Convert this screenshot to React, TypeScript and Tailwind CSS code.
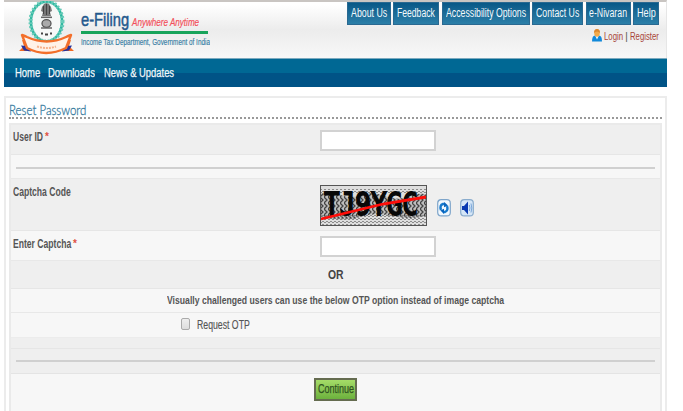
import { useLayoutEffect, useRef, useState, type ReactNode } from "react";

/** Condensed label: its text is squeezed or stretched to the given width. */
function Fit({ width, className = "", children }: { width: number; className?: string; children: ReactNode }) {
  const ref = useRef<HTMLSpanElement>(null);
  const [scale, setScale] = useState(1);
  useLayoutEffect(() => {
    if (ref.current) setScale(width / ref.current.offsetWidth);
  }, [width]);
  return (
    <span className={`block shrink-0 whitespace-nowrap ${className}`} style={{ width }}>
      <span ref={ref} className="inline-block origin-left" style={{ transform: `scaleX(${scale})` }}>
        {children}
      </span>
    </span>
  );
}

const topLinks = [
  { label: "About Us", text: 36, box: 44 },
  { label: "Feedback", text: 38, box: 46 },
  { label: "Accessibility Options", text: 80, box: 88 },
  { label: "Contact Us", text: 43, box: 51 },
  { label: "e-Nivaran", text: 38, box: 45 },
  { label: "Help", text: 19, box: 26 },
];

function Emblem() {
  return (
    <svg className="mt-px h-[54px] w-[56px] shrink-0" viewBox="0 0 56 54">
      <ellipse cx="27.5" cy="20.5" rx="15.6" ry="19.8" fill="#f6f8f7" stroke="#2fb8a0" strokeWidth="2.6" />
      <ellipse cx="27.5" cy="20.5" rx="16" ry="20.2" fill="none" stroke="#68cbb9" strokeWidth="4" strokeDasharray="1.8 1.8" />
      <path d="M23 6l2-3 2.5-1 2.5 1 2 3 1 4-2 1 1 4H23l1-4-2-1z" fill="#777" />
      <path d="M24.5 5v8M27.5 3v11M30.5 5v8" stroke="#444" strokeWidth="1" />
      <path d="M22 15.5h11v1.6H22z" fill="#666" />
      <ellipse cx="27.5" cy="22.5" rx="4.5" ry="3.8" fill="#aaa" stroke="#555" strokeWidth="1.3" />
      <path d="M22 27h11" stroke="#666" strokeWidth="1.5" />
      <path d="M22 32.5h2m2 1h3m2-1h2" stroke="#444" strokeWidth="2" />
      <path d="M0 50l5-5-2-6 9 2v9zM55 50l-5-5 2-6-9 2v9z" fill="#f26a24" />
      <path d="M2 44.5l6 .5 4 5.5-7-1zM53 44.5l-6 .5-4 5.5 7-1z" fill="#28329b" />
      <path d="M3 34q3 1 5 2 20 9 39 0 2-1 5-2l-5 13q-20 10-39 0z" fill="#fff2e8" stroke="#f36f2b" strokeWidth="2.4" strokeLinejoin="round" />
      <path d="M18 45.5q10 3 19 0" fill="none" stroke="#f7b28b" strokeWidth="2" strokeDasharray="2 1" />
    </svg>
  );
}

function Captcha() {
  return (
    <svg className="block h-[41px] w-[107px]" viewBox="0 0 107 41">
      <defs>
        <pattern id="zigzag" width="4" height="3" patternUnits="userSpaceOnUse">
          <path d="M-1 0L1 2 3 0 5 2" fill="none" stroke="#777" strokeWidth="0.8" />
        </pattern>
        <pattern id="waves" width="4" height="6" patternUnits="userSpaceOnUse">
          <path d="M0 0L3 3 0 6" fill="none" stroke="#444" strokeWidth="1.3" />
        </pattern>
      </defs>
      <rect width="107" height="41" fill="#dedede" />
      <path d="M1 9Q8 6 20 10T42 10 65 11 86 12 106 9V31Q90 35 72 31T40 32 1 32z" fill="#bdbdbd" />
      <path d="M1 9Q8 6 20 10T42 10 65 11 86 12 106 9V31Q90 35 72 31T40 32 1 32z" fill="url(#waves)" />
      <path d="M1 4h105v5H1zM1 30h105v10H1z" fill="url(#zigzag)" />
      <text
        x="4"
        y="29.5"
        textLength="94"
        lengthAdjust="spacingAndGlyphs"
        fontFamily="DejaVu Sans Mono, monospace"
        fontSize="32"
        fill="#080808"
        stroke="#080808"
        strokeWidth="1.8"
      >
        TJ9YGC
      </text>
      <path d="M1 34L63 19 106 12" fill="none" stroke="#ff0d08" strokeWidth="2.8" />
      <rect x="0.5" y="0.5" width="106" height="40" fill="none" stroke="#555" />
    </svg>
  );
}

function RefreshIcon() {
  return (
    <svg className="h-[18px] w-[14px]" viewBox="0 0 14 18">
      <rect x="0.7" y="0.7" width="12.6" height="16.2" rx="3.5" fill="#f1f8fe" stroke="#7ea5ca" strokeWidth="1.2" />
      <path d="M4 11Q2.4 6.2 6 5h2" fill="none" stroke="#1679cc" strokeWidth="2.4" />
      <path d="M7.2 3L11 6.5 7 8.2z" fill="#0864bd" />
      <path d="M10 7q1.6 4.6-2 6H6" fill="none" stroke="#1679cc" strokeWidth="2.4" />
      <path d="M7 9.8L3.4 11.6 7 15z" fill="#0864bd" />
    </svg>
  );
}

function SpeakerIcon() {
  return (
    <svg className="h-[18px] w-[14px]" viewBox="0 0 14 18">
      <rect x="0.7" y="0.7" width="12.6" height="16.2" rx="3.5" fill="#d5e6f7" stroke="#8aaccd" strokeWidth="1.2" />
      <path d="M2 7h2l4-4.5v13L4 11H2z" fill="#0839b1" />
      <path d="M9.3 6q1.4 3 0 6M11 4.5q1.6 4.5 0 9" fill="none" stroke="#7aa6da" strokeWidth="1" />
    </svg>
  );
}

function TextBox() {
  return <input className="block h-[21px] w-[116px] shrink-0 border-2 border-[#d2d2d2] bg-white" />;
}

const label = "text-[12px] leading-[14px] font-bold text-[#555]";

function Star() {
  return <span className="ml-[2px] text-[10px] leading-[14px] font-bold text-[#e0503f]">*</span>;
}

export default function App() {
  return (
    <div className="h-[411px] w-[683px] overflow-hidden bg-white pl-1 font-['Liberation_Sans',Arial,sans-serif]">
      <header className="flex h-[58px] w-[663px] justify-between border-t-2 border-r border-t-[#c9c5c2] border-r-[#e6e6e6] bg-linear-to-b from-white from-5% via-[#ececec] via-50% to-[#f8f8f8]">
        <div className="-mt-[2px] flex pl-[15px]">
          <Emblem />
          <div className="ml-[6px] pt-[9px]">
            <div className="flex h-[22px] items-baseline">
              <Fit width={48} className="text-[19px] leading-[22px] text-[#24598d] [-webkit-text-stroke:0.5px]">e-Filing</Fit>
              <Fit width={67} className="ml-[3px] text-[10.5px] text-[#f2505c] italic [-webkit-text-stroke:0.2px]">Anywhere Anytime</Fit>
            </div>
            <div className="h-[3px] w-[127px] bg-[#18a45b]" />
            <Fit width={129} className="mt-[3px] text-[9px] leading-[10px] text-[#347ca3] [-webkit-text-stroke:0.15px]">
              Income Tax Department, Government of India
            </Fit>
          </div>
        </div>
        <div className="pr-[7px]">
          <nav className="flex h-[23px] gap-[2.4px]">
            {topLinks.map((item) => (
              <a key={item.label} className="flex h-[23px] justify-center border border-[#2a6991] bg-linear-to-b from-[#075887] to-[#2c7fa8] pt-[3px] text-[12px] leading-[14px] text-[#f4fafd]" style={{ width: item.box }}>
                <Fit width={item.text}>{item.label}</Fit>
              </a>
            ))}
          </nav>
          <div className="flex justify-end pt-[4px] text-[11.5px] leading-[14px] text-[#a74438]">
            <svg className="h-[13px] w-[10px]" viewBox="0 0 10 13">
              <path d="M0 12.5q0-6 3-6h4q3 0 3 6z" fill="#1189da" />
              <path d="M3.3 7L5 10.5 6.7 7z" fill="#eaf4fb" />
              <ellipse cx="5" cy="4" rx="2.8" ry="3.7" fill="#f3aa49" />
              <path d="M2 4q0-4 3-4t3 4Q5 1 2 4z" fill="#db872f" />
            </svg>
            <Fit width={19} className="ml-[2px]">Login</Fit>
            <span className="w-[7px] text-center text-[#666]">|</span>
            <Fit width={29}>Register</Fit>
          </div>
        </div>
      </header>

      <nav className="flex h-[29px] w-[663px] border-t border-[#7caabf] bg-linear-to-b from-[#006894] from-50% to-[#005386] to-50% pt-[7px] pl-[11px] text-[12.5px] leading-[14px] text-[#f3f8fb] [-webkit-text-stroke:0.25px]">
        <Fit width={25}>Home</Fit>
        <Fit width={47} className="ml-[8px]">Downloads</Fit>
        <Fit width={70} className="ml-[9px]">News &amp; Updates</Fit>
      </nav>

      <main className="mt-[9px] h-[330px] w-[663px] border-2 border-[#ececec] bg-white px-[3px]">
        <h1 className="h-[21px] border-b-2 border-dotted border-[#999] pt-[3px]">
          <Fit width={77} className="font-[Lato,sans-serif] text-[14px] leading-[17px] font-light text-[#34799d] [-webkit-text-stroke:0.3px]">Reset Password</Fit>
        </h1>
        <div className="mt-[4px] h-[300px] border-2 border-b-0 border-[#eaeaea] bg-[#f7f7f7] text-[#4b4b4b]">
          <div className="flex h-[30px] border-b border-[#e6e6e6] bg-[#efefef] pl-[2px]">
            <div className="flex w-[307px] pt-[5px]"><Fit width={30} className={label}>User ID</Fit><Star /></div>
            <div className="pt-[5px]"><TextBox /></div>
          </div>
          <div className="h-[24px] border-b border-[#e8e8e8] px-[5px] pt-[12px]"><div className="h-[2px] bg-[#d0d0d0]" /></div>
          <div className="flex h-[52px] border-b border-[#e6e6e6] bg-[#efefef] pl-[2px]">
            <div className="w-[307px] pt-[6px]"><Fit width={58} className={label}>Captcha Code</Fit></div>
            <div className="pt-[6px]"><Captcha /></div>
            <div className="flex gap-[9px] pt-[20px] pl-[10px]"><RefreshIcon /><SpeakerIcon /></div>
          </div>
          <div className="flex h-[30px] border-b border-[#e8e8e8] pl-[2px]">
            <div className="flex w-[307px] pt-[6px]"><Fit width={58} className={label}>Enter Captcha</Fit><Star /></div>
            <div className="pt-[5px]"><TextBox /></div>
          </div>
          <div className="flex h-[28px] border-b border-[#e6e6e6] bg-[#efefef] pt-[6px] pl-[317px]">
            <Fit width={16} className="text-[13px] leading-[15px] font-bold text-[#444]">OR</Fit>
          </div>
          <div className="flex h-[24px] border-b border-[#e8e8e8] pt-[4px] pl-[156px]">
            <Fit width={337} className="text-[11.5px] leading-[14px] font-bold text-[#555]">
              Visually challenged users can use the below OTP option instead of image captcha
            </Fit>
          </div>
          <div className="flex h-[25px] border-b border-[#ececec] pt-[5px] pl-[170px]">
            <div className="h-[12px] w-[9px] rounded-[2px] border border-[#aaa] bg-linear-to-b from-[#eee] to-[#ddd]" />
            <Fit width={53} className="ml-[7px] text-[12px] leading-[14px] text-[#555] [-webkit-text-stroke:0.15px]">Request OTP</Fit>
          </div>
          <div className="h-[11px] border-b border-[#e6e6e6] bg-[#efefef]" />
          <div className="h-[25px] border-b border-[#e4e4e4] bg-[#efefef] px-[5px] pt-[11px]"><div className="h-[2px] bg-[#d0d0d0]" /></div>
          <div className="pt-[4px] pl-[303px]">
            <button className="flex h-[23px] w-[43px] justify-center border-2 border-[#656c50] bg-linear-to-b from-[#a5dc68] to-[#6cb13d] pt-[2px] text-[12px] leading-[15px] text-[#30521f] [-webkit-text-stroke:0.25px]">
              <Fit width={36}>Continue</Fit>
            </button>
          </div>
        </div>
      </main>
    </div>
  );
}
